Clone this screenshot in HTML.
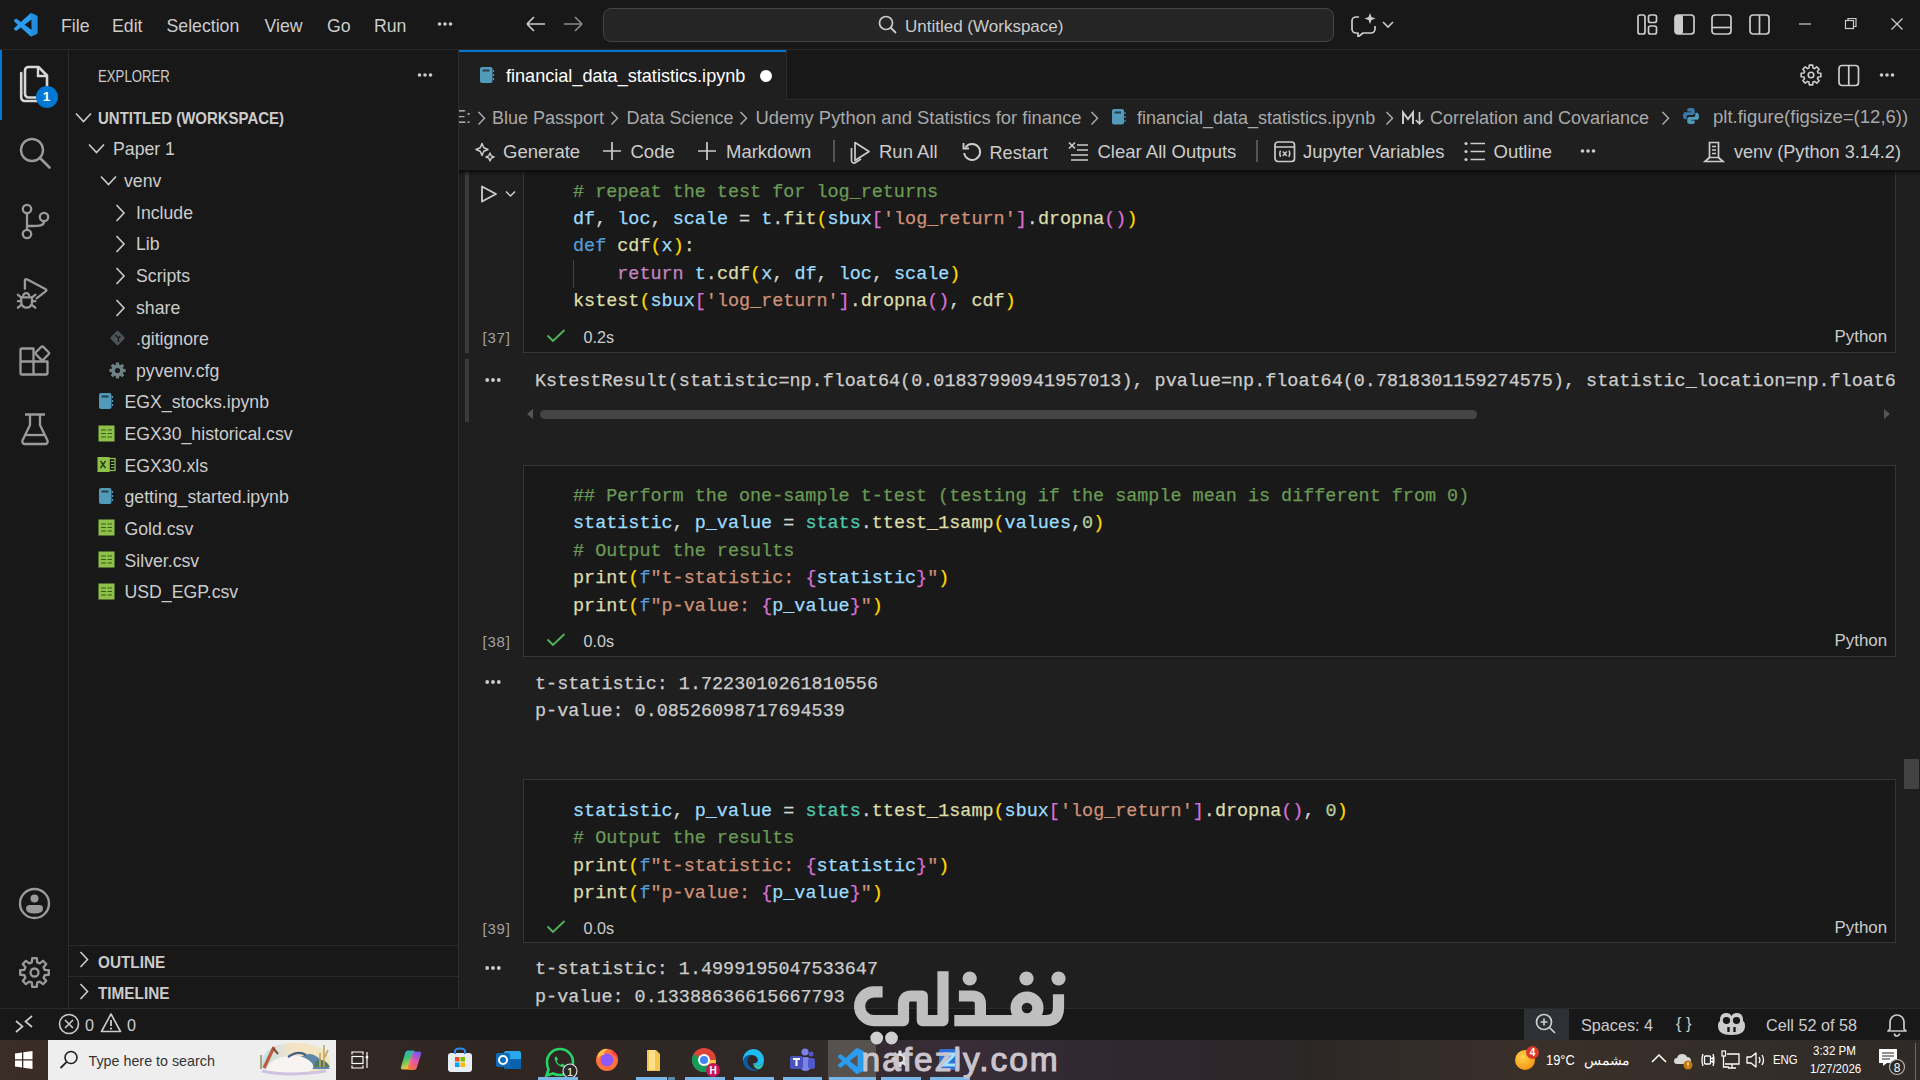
<!DOCTYPE html>
<html><head><meta charset="utf-8"><style>
html,body{margin:0;padding:0;width:1920px;height:1080px;overflow:hidden;background:#181818}
body>div,body>svg{position:absolute;box-sizing:border-box}
.s{font-family:"Liberation Sans",sans-serif;white-space:pre}
.m{font-family:"Liberation Mono",monospace;white-space:pre;-webkit-text-stroke:0.25px currentColor}
</style></head><body>
<div style="left:0px;top:0px;width:1920px;height:49px;background:#181818;"></div>
<div style="left:0px;top:49px;width:1920px;height:1px;background:#2b2b2b;"></div>
<div style="left:0px;top:50px;width:68px;height:959px;background:#181818;"></div>
<div style="left:68px;top:50px;width:1px;height:959px;background:#2b2b2b;"></div>
<div style="left:69px;top:50px;width:390px;height:959px;background:#181818;"></div>
<div style="left:458px;top:50px;width:1px;height:959px;background:#2b2b2b;"></div>
<div style="left:459px;top:50px;width:1461px;height:959px;background:#1f1f1f;"></div>
<div style="left:0px;top:1008px;width:1920px;height:32px;background:#181818;"></div>
<div style="left:0px;top:1008px;width:1920px;height:1px;background:#2b2b2b;"></div>
<svg style="left:13.5px;top:13px;" width="25" height="25" viewBox="0 0 25 25"><g transform="scale(0.235)"><path fill="#2a9cf0" d="M96.46 10.8L75.86.87a6.23 6.23 0 0 0-7.1 1.21L29.35 38.04 12.19 25.01a4.16 4.16 0 0 0-5.32.24L1.36 30.26a4.17 4.17 0 0 0 0 6.16L16.25 50 1.37 63.58a4.17 4.17 0 0 0 0 6.16l5.51 5.01a4.16 4.16 0 0 0 5.32.24l17.16-13.03 39.41 35.96a6.22 6.22 0 0 0 7.1 1.21l20.6-9.92A6.25 6.25 0 0 0 100 83.58V16.42a6.25 6.25 0 0 0-3.54-5.62zM75.01 72.7L45.1 50l29.91-22.7v45.4z"/><path fill="#1a7ccc" d="M96.46 10.8L75.86.87a6.23 6.23 0 0 0-7.1 1.21L68.76 2.08 75 27.3V72.7L68.76 97.92a6.22 6.22 0 0 0 7.1 1.21l20.6-9.92A6.25 6.25 0 0 0 100 83.58V16.42a6.25 6.25 0 0 0-3.54-5.62z" opacity=".5"/></g></svg>
<div class="s" style="left:61.00px;top:17.96px;font-size:17.7px;line-height:17.7px;color:#cccccc;">File</div>
<div class="s" style="left:112.00px;top:17.96px;font-size:17.7px;line-height:17.7px;color:#cccccc;">Edit</div>
<div class="s" style="left:166.50px;top:17.96px;font-size:17.7px;line-height:17.7px;color:#cccccc;">Selection</div>
<div class="s" style="left:264.50px;top:17.96px;font-size:17.7px;line-height:17.7px;color:#cccccc;">View</div>
<div class="s" style="left:327.00px;top:17.96px;font-size:17.7px;line-height:17.7px;color:#cccccc;">Go</div>
<div class="s" style="left:374.00px;top:17.96px;font-size:17.7px;line-height:17.7px;color:#cccccc;">Run</div>
<svg style="left:430px;top:14px;" width="30" height="20" viewBox="0 0 30 20"><circle cx="9.5" cy="10" r="1.8" fill="#cccccc"/><circle cx="15.0" cy="10" r="1.8" fill="#cccccc"/><circle cx="20.5" cy="10" r="1.8" fill="#cccccc"/></svg>
<svg style="left:524px;top:14px;" width="24" height="20" viewBox="0 0 24 20"><path d="M3 10H21M3 10L10 3M3 10L10 17" stroke="#cccccc" stroke-width="1.7" fill="none"/></svg>
<svg style="left:561px;top:14px;" width="24" height="20" viewBox="0 0 24 20"><path d="M3 10H21M21 10L14 3M21 10L14 17" stroke="#8a8a8a" stroke-width="1.7" fill="none"/></svg>
<div style="left:603px;top:8px;width:731px;height:34px;background:#252525;border:1px solid #444444;border-radius:8px"></div>
<svg style="left:876px;top:14px;" width="22" height="22" viewBox="0 0 22 22"><circle cx="10" cy="9" r="6.5" stroke="#cccccc" stroke-width="1.7" fill="none"/><path d="M14.5 13.5L20 19" stroke="#cccccc" stroke-width="1.8"/></svg>
<div class="s" style="left:905.00px;top:17.80px;font-size:17px;line-height:17px;color:#cccccc;">Untitled (Workspace)</div>
<svg style="left:1350px;top:11px;" width="48" height="26" viewBox="0 0 48 26"><path d="M9 6H6a4 4 0 0 0-4 4v8a4 4 0 0 0 4 4h2v4l5-4h8a4 4 0 0 0 4-4v-3" stroke="#cccccc" stroke-width="1.7" fill="none" stroke-linejoin="round"/><path d="M20 2l1.5 4 4 1.5-4 1.5-1.5 4-1.5-4-4-1.5 4-1.5z" fill="#cccccc"/><path d="M33 11l5 5 5-5" stroke="#cccccc" stroke-width="1.6" fill="none"/></svg>
<svg style="left:1636px;top:13px;" width="24" height="24" viewBox="0 0 24 24"><rect x="2" y="2" width="7" height="19" rx="2" stroke="#cccccc" stroke-width="1.7" fill="none"/><rect x="12.5" y="2" width="8" height="7.5" rx="2" stroke="#cccccc" stroke-width="1.7" fill="none"/><rect x="12.5" y="13" width="8" height="8" rx="2" stroke="#cccccc" stroke-width="1.7" fill="none"/></svg>
<svg style="left:1673px;top:13px;" width="24" height="24" viewBox="0 0 24 24"><rect x="2" y="2" width="19" height="19" rx="3" stroke="#cccccc" stroke-width="1.7" fill="none"/><rect x="2" y="2" width="8" height="19" rx="2" fill="#cccccc"/></svg>
<svg style="left:1710px;top:13px;" width="24" height="24" viewBox="0 0 24 24"><rect x="2" y="2" width="19" height="19" rx="3" stroke="#cccccc" stroke-width="1.7" fill="none"/><path d="M2 14.5H21" stroke="#cccccc" stroke-width="1.7"/></svg>
<svg style="left:1748px;top:13px;" width="24" height="24" viewBox="0 0 24 24"><rect x="2" y="2" width="19" height="19" rx="3" stroke="#cccccc" stroke-width="1.7" fill="none"/><path d="M11.5 2V21" stroke="#cccccc" stroke-width="1.7"/></svg>
<svg style="left:1798px;top:18px;" width="16" height="12" viewBox="0 0 16 12"><path d="M1 6H13" stroke="#cccccc" stroke-width="1.2"/></svg>
<svg style="left:1843px;top:16px;" width="16" height="16" viewBox="0 0 16 16"><rect x="2.5" y="4.5" width="8" height="8" stroke="#cccccc" stroke-width="1.2" fill="none"/><path d="M5 4.5V2.5H13V10.5H11" stroke="#cccccc" stroke-width="1.2" fill="none"/></svg>
<svg style="left:1889px;top:16px;" width="16" height="16" viewBox="0 0 16 16"><path d="M2.5 2.5L13.5 13.5M13.5 2.5L2.5 13.5" stroke="#cccccc" stroke-width="1.3"/></svg>
<div style="left:0px;top:50px;width:2px;height:70px;background:#0078d4;"></div>
<svg style="left:0px;top:50px;" width="68" height="70" viewBox="0 0 68 70"><path d="M21 74" /><path d="M21.2 23V47.5A3.5 3.5 0 0 0 24.7 51H41" stroke="#d7d7d7" stroke-width="2.6" fill="none" stroke-linecap="round"/><path d="M25 20.5A3.5 3.5 0 0 1 28.5 17H38.5L47 25.5V44A3.5 3.5 0 0 1 43.5 47.5H28.5A3.5 3.5 0 0 1 25 44Z" stroke="#d7d7d7" stroke-width="2.6" fill="none" stroke-linejoin="round"/><path d="M38 17.5V26H46.5" stroke="#d7d7d7" stroke-width="2.4" fill="none"/></svg>
<div style="left:35.5px;top:85.5px;width:22px;height:22px;border-radius:50%;background:#0078d4"></div>
<div class="s" style="left:35.5px;top:88px;width:22px;text-align:center;font-size:13.5px;line-height:17px;color:#fff;font-weight:700">1</div>
<svg style="left:17px;top:135px;" width="36" height="36" viewBox="0 0 36 36"><circle cx="15" cy="15" r="11" stroke="#9a9a9a" stroke-width="2.4" fill="none"/><path d="M23 23L32.5 32.5" stroke="#9a9a9a" stroke-width="2.6" stroke-linecap="round"/></svg>
<svg style="left:18px;top:202px;" width="34" height="40" viewBox="0 0 34 40"><circle cx="9" cy="7" r="4.2" stroke="#9a9a9a" stroke-width="2.3" fill="none"/><circle cx="9" cy="32" r="4.2" stroke="#9a9a9a" stroke-width="2.3" fill="none"/><circle cx="26" cy="15" r="4.2" stroke="#9a9a9a" stroke-width="2.3" fill="none"/><path d="M9 11.2V27.8M26 19.2C26 24 21 24 14 24H9" stroke="#9a9a9a" stroke-width="2.3" fill="none"/></svg>
<svg style="left:0px;top:270px;" width="68" height="50" viewBox="0 0 68 50"><g stroke="#9a9a9a" stroke-width="2.3" fill="none" stroke-linejoin="round" stroke-linecap="round"><path d="M24.9 18.7V11Q24.9 8.2 27.4 9.5L45.3 19Q47.6 20.3 45.3 21.6L36.6 28.3"/><path d="M23.1 26.2A3.1 3.1 0 0 1 29.3 26.2"/><path d="M21.2 27.4H32V32.3A5.4 5.4 0 0 1 21.2 32.3Z"/><path d="M17.9 24.8L21.2 27.4M17.9 31.2H21.2M17.9 37.7L21.4 34.9M35.3 24.8L32 27.4M35.3 31.2H32M35.3 37.7L31.8 34.9"/></g></svg>
<svg style="left:17px;top:343px;" width="36" height="36" viewBox="0 0 36 36"><path d="M5 5.5H16.5V31.5H5A1.5 1.5 0 0 1 3.5 30V7A1.5 1.5 0 0 1 5 5.5Z M3.5 18.5H30.5V30A1.5 1.5 0 0 1 29 31.5H16.5" stroke="#9a9a9a" stroke-width="2.3" fill="none" stroke-linejoin="round"/><rect x="20" y="5" width="10.5" height="10.5" rx="1.5" transform="rotate(45 25.25 10.25)" stroke="#9a9a9a" stroke-width="2.3" fill="none"/></svg>
<svg style="left:18px;top:411px;" width="34" height="36" viewBox="0 0 34 36"><path d="M7 3.5H27M12 3.5V14L4.5 29.5A2.5 2.5 0 0 0 7 33H27a2.5 2.5 0 0 0 2.5-3.5L22 14V3.5" stroke="#9a9a9a" stroke-width="2.3" fill="none" stroke-linejoin="round"/><path d="M8 24H26" stroke="#9a9a9a" stroke-width="2.3"/></svg>
<svg style="left:17px;top:886px;" width="36" height="36" viewBox="0 0 36 36"><circle cx="17.5" cy="17.5" r="14.5" stroke="#9a9a9a" stroke-width="2.4" fill="none"/><circle cx="17.5" cy="12.5" r="4" fill="#9a9a9a"/><path d="M9 22.5Q9 19 12.5 19H22.5Q26 19 26 22.5Q26 27.5 17.5 27.5Q9 27.5 9 22.5Z" fill="#9a9a9a"/></svg>
<svg style="left:17px;top:955px;" width="36" height="36" viewBox="0 0 36 36"><path d="M27.65 14.80 L31.82 15.25 L31.82 19.75 L27.65 20.20 L26.58 22.77 L29.22 26.04 L26.04 29.22 L22.77 26.58 L20.20 27.65 L19.75 31.82 L15.25 31.82 L14.80 27.65 L12.23 26.58 L8.96 29.22 L5.78 26.04 L8.42 22.77 L7.35 20.20 L3.18 19.75 L3.18 15.25 L7.35 14.80 L8.42 12.23 L5.78 8.96 L8.96 5.78 L12.23 8.42 L14.80 7.35 L15.25 3.18 L19.75 3.18 L20.20 7.35 L22.77 8.42 L26.04 5.78 L29.22 8.96 L26.58 12.23Z" stroke="#9a9a9a" stroke-width="2.3" fill="none" stroke-linejoin="round"/><circle cx="17.5" cy="17.5" r="4" stroke="#9a9a9a" stroke-width="2.3" fill="none"/></svg>
<div class="s" style="left:98.00px;top:68.54px;font-size:15.6px;line-height:15.6px;color:#cccccc;transform:scaleX(0.846);transform-origin:0 0;">EXPLORER</div>
<svg style="left:410px;top:65px;" width="30" height="20" viewBox="0 0 30 20"><circle cx="9.5" cy="10" r="1.8" fill="#cccccc"/><circle cx="15.0" cy="10" r="1.8" fill="#cccccc"/><circle cx="20.5" cy="10" r="1.8" fill="#cccccc"/></svg>
<svg style="left:74px;top:110.5px;" width="19" height="13" viewBox="0 0 19 13"><path d="M2 2.5 L9.5 10.5 L17 2.5" stroke="#cccccc" stroke-width="1.6" fill="none"/></svg>
<div class="s" style="left:98.00px;top:109.73px;font-size:16.2px;line-height:16.2px;color:#cccccc;font-weight:700;transform:scaleX(0.925);transform-origin:0 0;">UNTITLED (WORKSPACE)</div>
<svg style="left:87px;top:142.0px;" width="19" height="13" viewBox="0 0 19 13"><path d="M2 2.5 L9.5 10.5 L17 2.5" stroke="#cccccc" stroke-width="1.6" fill="none"/></svg>
<div class="s" style="left:113.00px;top:141.46px;font-size:17.7px;line-height:17.7px;color:#cccccc;">Paper 1</div>
<svg style="left:98.5px;top:173.62px;" width="19" height="13" viewBox="0 0 19 13"><path d="M2 2.5 L9.5 10.5 L17 2.5" stroke="#cccccc" stroke-width="1.6" fill="none"/></svg>
<div class="s" style="left:124.00px;top:173.08px;font-size:17.7px;line-height:17.7px;color:#cccccc;">venv</div>
<svg style="left:113.5px;top:202.74px;" width="12.5" height="20" viewBox="0 0 12.5 20"><path d="M2.5 2 L10.0 10.0 L2.5 18" stroke="#cccccc" stroke-width="1.6" fill="none"/></svg>
<div class="s" style="left:136.00px;top:204.70px;font-size:17.7px;line-height:17.7px;color:#cccccc;">Include</div>
<svg style="left:113.5px;top:234.36px;" width="12.5" height="20" viewBox="0 0 12.5 20"><path d="M2.5 2 L10.0 10.0 L2.5 18" stroke="#cccccc" stroke-width="1.6" fill="none"/></svg>
<div class="s" style="left:136.00px;top:236.32px;font-size:17.7px;line-height:17.7px;color:#cccccc;">Lib</div>
<svg style="left:113.5px;top:265.98px;" width="12.5" height="20" viewBox="0 0 12.5 20"><path d="M2.5 2 L10.0 10.0 L2.5 18" stroke="#cccccc" stroke-width="1.6" fill="none"/></svg>
<div class="s" style="left:136.00px;top:267.94px;font-size:17.7px;line-height:17.7px;color:#cccccc;">Scripts</div>
<svg style="left:113.5px;top:297.6px;" width="12.5" height="20" viewBox="0 0 12.5 20"><path d="M2.5 2 L10.0 10.0 L2.5 18" stroke="#cccccc" stroke-width="1.6" fill="none"/></svg>
<div class="s" style="left:136.00px;top:299.56px;font-size:17.7px;line-height:17.7px;color:#cccccc;">share</div>
<svg style="left:108px;top:327.72px;" width="19" height="19" viewBox="0 0 19 19"><rect x="4" y="4.5" width="11" height="11" rx="1.5" transform="rotate(45 9.5 10)" fill="#4b5357"/><path d="M7.5 7L10.5 10V14M10.5 10L12.5 8" stroke="#181818" stroke-width="1.3" fill="none"/></svg>
<div class="s" style="left:136.00px;top:331.18px;font-size:17.7px;line-height:17.7px;color:#cccccc;">.gitignore</div>
<svg style="left:108px;top:360.84000000000003px;" width="19" height="19" viewBox="0 0 19 19"><path d="M15.23 7.73 L17.57 8.03 L17.57 10.97 L15.23 11.27 L14.81 12.30 L16.24 14.17 L14.17 16.24 L12.30 14.81 L11.27 15.23 L10.97 17.57 L8.03 17.57 L7.73 15.23 L6.70 14.81 L4.83 16.24 L2.76 14.17 L4.19 12.30 L3.77 11.27 L1.43 10.97 L1.43 8.03 L3.77 7.73 L4.19 6.70 L2.76 4.83 L4.83 2.76 L6.70 4.19 L7.73 3.77 L8.03 1.43 L10.97 1.43 L11.27 3.77 L12.30 4.19 L14.17 2.76 L16.24 4.83 L14.81 6.70Z" fill="#6d8086"/><circle cx="9.5" cy="9.5" r="2.6" fill="#181818"/></svg>
<div class="s" style="left:136.00px;top:362.80px;font-size:17.7px;line-height:17.7px;color:#cccccc;">pyvenv.cfg</div>
<svg style="left:98px;top:392.46000000000004px;" width="16" height="18" viewBox="0 0 16 18"><rect x="1" y="1" width="12.5" height="16" rx="2" fill="#519aba"/><rect x="3.5" y="3.5" width="7" height="2" fill="#1a1a1a" opacity=".7"/><path d="M14.5 4V6M14.5 8V10M14.5 12V14" stroke="#519aba" stroke-width="1.2"/></svg>
<div class="s" style="left:124.50px;top:394.42px;font-size:17.7px;line-height:17.7px;color:#cccccc;">EGX_stocks.ipynb</div>
<svg style="left:97.5px;top:424.58px;" width="17" height="17" viewBox="0 0 17 17"><rect x="0.5" y="0.5" width="16" height="16" fill="#8dc149"/><path d="M3 5H8M9.5 5H14M3 8.5H8M9.5 8.5H14M3 12H8M9.5 12H14" stroke="#3b5a1c" stroke-width="1.2"/></svg>
<div class="s" style="left:124.50px;top:426.03px;font-size:17.7px;line-height:17.7px;color:#cccccc;">EGX30_historical.csv</div>
<svg style="left:96.5px;top:456.2px;" width="19" height="17" viewBox="0 0 19 17"><rect x="0.5" y="1" width="12" height="15" fill="#8dc149"/><rect x="12" y="2.5" width="6" height="12" fill="none" stroke="#8dc149" stroke-width="1.3"/><path d="M3.5 5L8.5 12M8.5 5L3.5 12" stroke="#2a3d14" stroke-width="1.4"/><path d="M14 5.5H17M14 8.5H17M14 11.5H17" stroke="#8dc149" stroke-width="1"/></svg>
<div class="s" style="left:124.50px;top:457.65px;font-size:17.7px;line-height:17.7px;color:#cccccc;">EGX30.xls</div>
<svg style="left:98px;top:487.32px;" width="16" height="18" viewBox="0 0 16 18"><rect x="1" y="1" width="12.5" height="16" rx="2" fill="#519aba"/><rect x="3.5" y="3.5" width="7" height="2" fill="#1a1a1a" opacity=".7"/><path d="M14.5 4V6M14.5 8V10M14.5 12V14" stroke="#519aba" stroke-width="1.2"/></svg>
<div class="s" style="left:124.50px;top:489.27px;font-size:17.7px;line-height:17.7px;color:#cccccc;">getting_started.ipynb</div>
<svg style="left:97.5px;top:519.44px;" width="17" height="17" viewBox="0 0 17 17"><rect x="0.5" y="0.5" width="16" height="16" fill="#8dc149"/><path d="M3 5H8M9.5 5H14M3 8.5H8M9.5 8.5H14M3 12H8M9.5 12H14" stroke="#3b5a1c" stroke-width="1.2"/></svg>
<div class="s" style="left:124.50px;top:520.90px;font-size:17.7px;line-height:17.7px;color:#cccccc;">Gold.csv</div>
<svg style="left:97.5px;top:551.06px;" width="17" height="17" viewBox="0 0 17 17"><rect x="0.5" y="0.5" width="16" height="16" fill="#8dc149"/><path d="M3 5H8M9.5 5H14M3 8.5H8M9.5 8.5H14M3 12H8M9.5 12H14" stroke="#3b5a1c" stroke-width="1.2"/></svg>
<div class="s" style="left:124.50px;top:552.51px;font-size:17.7px;line-height:17.7px;color:#cccccc;">Silver.csv</div>
<svg style="left:97.5px;top:582.6800000000001px;" width="17" height="17" viewBox="0 0 17 17"><rect x="0.5" y="0.5" width="16" height="16" fill="#8dc149"/><path d="M3 5H8M9.5 5H14M3 8.5H8M9.5 8.5H14M3 12H8M9.5 12H14" stroke="#3b5a1c" stroke-width="1.2"/></svg>
<div class="s" style="left:124.50px;top:584.14px;font-size:17.7px;line-height:17.7px;color:#cccccc;">USD_EGP.csv</div>
<div style="left:69px;top:945px;width:389px;height:1px;background:#2b2b2b;"></div>
<div style="left:69px;top:976px;width:389px;height:1px;background:#2b2b2b;"></div>
<svg style="left:78px;top:950px;" width="12" height="19" viewBox="0 0 12 19"><path d="M2.5 2 L9.5 9.5 L2.5 17" stroke="#cccccc" stroke-width="1.6" fill="none"/></svg>
<div class="s" style="left:98.00px;top:953.73px;font-size:16.2px;line-height:16.2px;color:#cccccc;font-weight:700;transform:scaleX(0.945);transform-origin:0 0;">OUTLINE</div>
<svg style="left:78px;top:981.5px;" width="12" height="19" viewBox="0 0 12 19"><path d="M2.5 2 L9.5 9.5 L2.5 17" stroke="#cccccc" stroke-width="1.6" fill="none"/></svg>
<div class="s" style="left:98.00px;top:985.23px;font-size:16.2px;line-height:16.2px;color:#cccccc;font-weight:700;transform:scaleX(0.945);transform-origin:0 0;">TIMELINE</div>
<div style="left:459px;top:50px;width:1461px;height:49px;background:#181818;"></div>
<div style="left:459px;top:99px;width:1461px;height:1px;background:#2b2b2b;"></div>
<div style="left:459px;top:50px;width:327px;height:50px;background:#1f1f1f;"></div>
<div style="left:459px;top:50px;width:327px;height:2px;background:#0078d4;"></div>
<div style="left:786px;top:50px;width:1px;height:49px;background:#2b2b2b;"></div>
<svg style="left:479px;top:66px;" width="16" height="18" viewBox="0 0 16 18"><rect x="1" y="1" width="12.5" height="16" rx="2" fill="#519aba"/><rect x="3.5" y="3.5" width="7" height="2" fill="#1a1a1a" opacity=".7"/><path d="M14.5 4V6M14.5 8V10M14.5 12V14" stroke="#519aba" stroke-width="1.2"/></svg>
<div class="s" style="left:506.00px;top:66.86px;font-size:18.1px;line-height:18.1px;color:#ffffff;">financial_data_statistics.ipynb</div>
<div style="left:760px;top:69.5px;width:12px;height:12px;border-radius:50%;background:#ffffff"></div>
<svg style="left:1799px;top:63px;" width="26" height="26" viewBox="0 0 26 26"><path d="M19.02 9.98 L21.86 10.33 L21.86 13.67 L19.02 14.02 L18.39 15.53 L20.15 17.79 L17.79 20.15 L15.53 18.39 L14.02 19.02 L13.67 21.86 L10.33 21.86 L9.98 19.02 L8.47 18.39 L6.21 20.15 L3.85 17.79 L5.61 15.53 L4.98 14.02 L2.14 13.67 L2.14 10.33 L4.98 9.98 L5.61 8.47 L3.85 6.21 L6.21 3.85 L8.47 5.61 L9.98 4.98 L10.33 2.14 L13.67 2.14 L14.02 4.98 L15.53 5.61 L17.79 3.85 L20.15 6.21 L18.39 8.47Z" stroke="#cccccc" stroke-width="1.6" fill="none" stroke-linejoin="round"/><circle cx="12" cy="12" r="2.8" stroke="#cccccc" stroke-width="1.6" fill="none"/></svg>
<svg style="left:1836px;top:63px;" width="26" height="26" viewBox="0 0 26 26"><rect x="3" y="2.5" width="19.5" height="20" rx="3" stroke="#cccccc" stroke-width="1.7" fill="none"/><path d="M12.75 2.5V22.5" stroke="#cccccc" stroke-width="1.7"/></svg>
<svg style="left:1872px;top:65px;" width="30" height="20" viewBox="0 0 30 20"><circle cx="9.5" cy="10" r="1.8" fill="#cccccc"/><circle cx="15.0" cy="10" r="1.8" fill="#cccccc"/><circle cx="20.5" cy="10" r="1.8" fill="#cccccc"/></svg>
<div style="left:459px;top:104px;width:14px;height:26px;overflow:hidden"><div class="s" style="position:absolute;left:-5px;top:4.4px;font-size:18px;line-height:18px;color:#a9a9a9">E:</div></div>
<svg style="left:475.5px;top:109.5px;" width="11" height="16.5" viewBox="0 0 11 16.5"><path d="M2.5 2 L8.5 8.25 L2.5 14.5" stroke="#a9a9a9" stroke-width="1.5" fill="none"/></svg>
<div class="s" style="left:492.00px;top:109.40px;font-size:18px;line-height:18px;color:#a9a9a9;">Blue Passport</div>
<svg style="left:608.5px;top:109.5px;" width="11" height="16.5" viewBox="0 0 11 16.5"><path d="M2.5 2 L8.5 8.25 L2.5 14.5" stroke="#a9a9a9" stroke-width="1.5" fill="none"/></svg>
<div class="s" style="left:626.50px;top:109.40px;font-size:18px;line-height:18px;color:#a9a9a9;">Data Science</div>
<svg style="left:738.0px;top:109.5px;" width="11" height="16.5" viewBox="0 0 11 16.5"><path d="M2.5 2 L8.5 8.25 L2.5 14.5" stroke="#a9a9a9" stroke-width="1.5" fill="none"/></svg>
<div class="s" style="left:755.50px;top:109.06px;font-size:18.4px;line-height:18.4px;color:#a9a9a9;">Udemy Python and Statistics for finance</div>
<svg style="left:1088.5px;top:109.5px;" width="11" height="16.5" viewBox="0 0 11 16.5"><path d="M2.5 2 L8.5 8.25 L2.5 14.5" stroke="#a9a9a9" stroke-width="1.5" fill="none"/></svg>
<svg style="left:1111px;top:108px;" width="16" height="18" viewBox="0 0 16 18"><rect x="1" y="1" width="12" height="15.5" rx="2" fill="#519aba"/><rect x="3.5" y="3.5" width="6.5" height="2" fill="#1a1a1a" opacity=".7"/><path d="M14 4V6M14 8V10M14 12V14" stroke="#519aba" stroke-width="1.1"/></svg>
<div class="s" style="left:1137.00px;top:109.40px;font-size:18px;line-height:18px;color:#a9a9a9;">financial_data_statistics.ipynb</div>
<svg style="left:1384.0px;top:109.5px;" width="11" height="16.5" viewBox="0 0 11 16.5"><path d="M2.5 2 L8.5 8.25 L2.5 14.5" stroke="#a9a9a9" stroke-width="1.5" fill="none"/></svg>
<svg style="left:1400px;top:108.5px;" width="26" height="18" viewBox="0 0 26 18"><path d="M3 15V3.5L8 10L13 3.5V15" stroke="#cccccc" stroke-width="2" fill="none" stroke-linejoin="miter"/><path d="M19.5 3V14.5M15.8 11L19.5 14.8L23.2 11" stroke="#cccccc" stroke-width="1.7" fill="none"/></svg>
<div class="s" style="left:1430.00px;top:109.40px;font-size:18px;line-height:18px;color:#a9a9a9;">Correlation and Covariance</div>
<svg style="left:1659.5px;top:109.5px;" width="11" height="16.5" viewBox="0 0 11 16.5"><path d="M2.5 2 L8.5 8.25 L2.5 14.5" stroke="#a9a9a9" stroke-width="1.5" fill="none"/></svg>
<svg style="left:1682px;top:107px;" width="18" height="18" viewBox="0 0 18 18"><path d="M8.5 1C5 1 5.3 2.5 5.3 2.5V4.5H8.7V5.2H3.5S1 4.9 1 8.6 3.2 12.2 3.2 12.2H4.6V10.3S4.5 8 6.8 8H10.6S12.7 8 12.7 6V2.8S13 1 8.5 1Z" fill="#3c78aa"/><path d="M9.5 17C13 17 12.7 15.5 12.7 15.5V13.5H9.3V12.8H14.5S17 13.1 17 9.4 14.8 5.8 14.8 5.8H13.4V7.7S13.5 10 11.2 10H7.4S5.3 10 5.3 12V15.2S5 17 9.5 17Z" fill="#519aba"/></svg>
<div class="s" style="left:1713.00px;top:108.23px;font-size:18.55px;line-height:18.55px;color:#a9a9a9;">plt.figure(figsize=(12,6))</div>
<svg style="left:475px;top:141px;" width="22" height="22" viewBox="0 0 22 22"><path d="M7 2.5L8.8 6.7 13 8.5 8.8 10.3 7 14.5 5.2 10.3 1 8.5 5.2 6.7Z" stroke="#cccccc" stroke-width="1.5" fill="none" stroke-linejoin="round"/><path d="M15 12L16.2 14.8 19 16 16.2 17.2 15 20 13.8 17.2 11 16 13.8 14.8Z" stroke="#cccccc" stroke-width="1.4" fill="none" stroke-linejoin="round"/></svg>
<div class="s" style="left:503.00px;top:143.28px;font-size:18.5px;line-height:18.5px;color:#cccccc;">Generate</div>
<svg style="left:601.5px;top:141px;" width="20" height="20" viewBox="0 0 20 20"><path d="M10 1V19M1 10H19" stroke="#cccccc" stroke-width="1.7"/></svg>
<div class="s" style="left:630.50px;top:143.28px;font-size:18.5px;line-height:18.5px;color:#cccccc;">Code</div>
<svg style="left:696.5px;top:141px;" width="20" height="20" viewBox="0 0 20 20"><path d="M10 1V19M1 10H19" stroke="#cccccc" stroke-width="1.7"/></svg>
<div class="s" style="left:726.00px;top:143.28px;font-size:18.5px;line-height:18.5px;color:#cccccc;">Markdown</div>
<div style="left:833px;top:140px;width:1.5px;height:22px;background:#555555;"></div>
<svg style="left:848px;top:139px;" width="24" height="26" viewBox="0 0 24 26"><path d="M7 3.5L21 12.5L7 21.5Z" stroke="#cccccc" stroke-width="1.7" fill="none" stroke-linejoin="round"/><path d="M3.5 9V21.5A2.5 2.5 0 0 0 7.5 23.5L13 20" stroke="#cccccc" stroke-width="1.7" fill="none"/></svg>
<div class="s" style="left:879.00px;top:143.28px;font-size:18.5px;line-height:18.5px;color:#cccccc;">Run All</div>
<svg style="left:960px;top:140px;" width="24" height="24" viewBox="0 0 24 24"><path d="M5.5 7.5A8 8 0 1 1 4.2 13" stroke="#cccccc" stroke-width="1.9" fill="none"/><path d="M3.5 3V8.5H9" stroke="#cccccc" stroke-width="1.9" fill="none"/></svg>
<div class="s" style="left:989.50px;top:143.62px;font-size:18.1px;line-height:18.1px;color:#cccccc;">Restart</div>
<svg style="left:1066px;top:140px;" width="26" height="24" viewBox="0 0 26 24"><path d="M3 2.5L9 8.5M9 2.5L3 8.5" stroke="#cccccc" stroke-width="1.6"/><path d="M11 5H22M11 10H22M5 15H22M5 20H22" stroke="#cccccc" stroke-width="1.7"/></svg>
<div class="s" style="left:1097.50px;top:143.28px;font-size:18.5px;line-height:18.5px;color:#cccccc;">Clear All Outputs</div>
<div style="left:1256px;top:140px;width:1.5px;height:22px;background:#555555;"></div>
<svg style="left:1273px;top:140px;" width="24" height="24" viewBox="0 0 24 24"><rect x="2" y="2" width="19.5" height="19.5" rx="3" stroke="#cccccc" stroke-width="1.7" fill="none"/><path d="M2 7H21.5" stroke="#cccccc" stroke-width="1.5"/><path d="M7.5 10.5Q6 13 7.5 17M16 10.5Q17.5 13 16 17M9.8 11.5L13.8 16M13.8 11.5L9.8 16" stroke="#cccccc" stroke-width="1.4" fill="none"/></svg>
<div class="s" style="left:1303.00px;top:143.28px;font-size:18.5px;line-height:18.5px;color:#cccccc;">Jupyter Variables</div>
<svg style="left:1463px;top:140px;" width="24" height="24" viewBox="0 0 24 24"><circle cx="3" cy="3.5" r="1.6" fill="#cccccc"/><circle cx="3" cy="11.5" r="1.6" fill="#cccccc"/><circle cx="3" cy="19.5" r="1.6" fill="#cccccc"/><path d="M7.5 3.5H22M7.5 11.5H22M7.5 19.5H22" stroke="#cccccc" stroke-width="1.7"/></svg>
<div class="s" style="left:1493.50px;top:143.28px;font-size:18.5px;line-height:18.5px;color:#cccccc;">Outline</div>
<svg style="left:1573px;top:141px;" width="30" height="20" viewBox="0 0 30 20"><circle cx="9.5" cy="10" r="1.8" fill="#cccccc"/><circle cx="15.0" cy="10" r="1.8" fill="#cccccc"/><circle cx="20.5" cy="10" r="1.8" fill="#cccccc"/></svg>
<svg style="left:1702px;top:140px;" width="24" height="24" viewBox="0 0 24 24"><path d="M7.5 2.5H16.5V17.5H7.5Z" stroke="#cccccc" stroke-width="1.7" fill="none"/><path d="M10 6.5H14M10 10H14M10 13.5H14" stroke="#cccccc" stroke-width="1.5"/><path d="M7.5 17.5L3 21.5H21L16.5 17.5" stroke="#cccccc" stroke-width="1.7" fill="none"/></svg>
<div class="s" style="left:1734.00px;top:143.12px;font-size:18.1px;line-height:18.1px;color:#cccccc;">venv (Python 3.14.2)</div>
<div style="left:523px;top:170px;width:1373px;height:183px;background:#191919;border:1px solid #353535;border-top:none"></div>
<div style="left:465px;top:170px;width:4px;height:183px;background:#3a3a3a;"></div>
<div style="left:465px;top:359px;width:4px;height:63px;background:#3a3a3a;"></div>
<svg style="left:478px;top:183px;" width="42" height="22" viewBox="0 0 42 22"><path d="M4 3.5L18 11L4 18.5Z" stroke="#cccccc" stroke-width="1.8" fill="none" stroke-linejoin="round"/><path d="M28 8.5L32.5 13L37 8.5" stroke="#cccccc" stroke-width="1.5" fill="none"/></svg>
<div class="m" style="left:573px;top:183.58px;font-size:18.45px;line-height:18.45px"><span style="color:#6a9955"># repeat the test for log_returns</span></div>
<div class="m" style="left:573px;top:211.03px;font-size:18.45px;line-height:18.45px"><span style="color:#9cdcfe">df</span><span style="color:#d4d4d4">, </span><span style="color:#9cdcfe">loc</span><span style="color:#d4d4d4">, </span><span style="color:#9cdcfe">scale</span><span style="color:#d4d4d4"> = </span><span style="color:#9cdcfe">t</span><span style="color:#d4d4d4">.</span><span style="color:#dcdcaa">fit</span><span style="color:#ffd700">(</span><span style="color:#9cdcfe">sbux</span><span style="color:#da70d6">[</span><span style="color:#ce9178">'log_return'</span><span style="color:#da70d6">]</span><span style="color:#d4d4d4">.</span><span style="color:#dcdcaa">dropna</span><span style="color:#da70d6">()</span><span style="color:#ffd700">)</span></div>
<div class="m" style="left:573px;top:238.48px;font-size:18.45px;line-height:18.45px"><span style="color:#569cd6">def</span><span style="color:#d4d4d4"> </span><span style="color:#dcdcaa">cdf</span><span style="color:#ffd700">(</span><span style="color:#9cdcfe">x</span><span style="color:#ffd700">)</span><span style="color:#d4d4d4">:</span></div>
<div class="m" style="left:573px;top:265.93px;font-size:18.45px;line-height:18.45px"><span style="color:#d4d4d4">    </span><span style="color:#c586c0">return</span><span style="color:#d4d4d4"> </span><span style="color:#9cdcfe">t</span><span style="color:#d4d4d4">.</span><span style="color:#dcdcaa">cdf</span><span style="color:#ffd700">(</span><span style="color:#9cdcfe">x</span><span style="color:#d4d4d4">, </span><span style="color:#9cdcfe">df</span><span style="color:#d4d4d4">, </span><span style="color:#9cdcfe">loc</span><span style="color:#d4d4d4">, </span><span style="color:#9cdcfe">scale</span><span style="color:#ffd700">)</span></div>
<div class="m" style="left:573px;top:293.38px;font-size:18.45px;line-height:18.45px"><span style="color:#dcdcaa">kstest</span><span style="color:#ffd700">(</span><span style="color:#9cdcfe">sbux</span><span style="color:#da70d6">[</span><span style="color:#ce9178">'log_return'</span><span style="color:#da70d6">]</span><span style="color:#d4d4d4">.</span><span style="color:#dcdcaa">dropna</span><span style="color:#da70d6">()</span><span style="color:#d4d4d4">, </span><span style="color:#dcdcaa">cdf</span><span style="color:#ffd700">)</span></div>
<div style="left:573px;top:260px;width:1.2px;height:28px;background:#404040;"></div>
<div class="s" style="left:482.50px;top:330.25px;font-size:15px;line-height:15px;color:#a0a0a0;letter-spacing:0.8px">[37]</div>
<svg style="left:545px;top:328px;" width="22" height="16" viewBox="0 0 22 16"><path d="M2.5 7.5L8 13L19.5 2" stroke="#4fb35a" stroke-width="1.9" fill="none"/></svg>
<div class="s" style="left:583.50px;top:329.23px;font-size:16.2px;line-height:16.2px;color:#cccccc;">0.2s</div>
<div class="s" style="left:1834.50px;top:329.13px;font-size:16.9px;line-height:16.9px;color:#cccccc;">Python</div>
<svg style="left:478px;top:370px;" width="30" height="20" viewBox="0 0 30 20"><circle cx="9.2" cy="10" r="1.9" fill="#cccccc"/><circle cx="15.0" cy="10" r="1.9" fill="#cccccc"/><circle cx="20.8" cy="10" r="1.9" fill="#cccccc"/></svg>
<div class="m" style="left:535px;top:372.68px;width:1360px;overflow:hidden;font-size:18.45px;line-height:18.45px;color:#cccccc">KstestResult(statistic=np.float64(0.01837990941957013), pvalue=np.float64(0.7818301159274575), statistic_location=np.float64(-0.0121), statistic_sign=np.int8(1))</div>
<svg style="left:524px;top:406px;" width="12" height="16" viewBox="0 0 12 16"><path d="M9 3L3 8L9 13Z" fill="#555555"/></svg>
<svg style="left:1881px;top:406px;" width="12" height="16" viewBox="0 0 12 16"><path d="M3 3L9 8L3 13Z" fill="#555555"/></svg>
<div style="left:540px;top:410px;width:937px;height:9px;border-radius:5px;background:#454545"></div>
<div style="left:523px;top:465px;width:1373px;height:192px;background:#191919;border:1px solid #353535"></div>
<div class="m" style="left:573px;top:487.88px;font-size:18.45px;line-height:18.45px"><span style="color:#6a9955">## Perform the one-sample t-test (testing if the sample mean is different from 0)</span></div>
<div class="m" style="left:573px;top:515.33px;font-size:18.45px;line-height:18.45px"><span style="color:#9cdcfe">statistic</span><span style="color:#d4d4d4">, </span><span style="color:#9cdcfe">p_value</span><span style="color:#d4d4d4"> = </span><span style="color:#4ec9b0">stats</span><span style="color:#d4d4d4">.</span><span style="color:#dcdcaa">ttest_1samp</span><span style="color:#ffd700">(</span><span style="color:#9cdcfe">values</span><span style="color:#d4d4d4">,</span><span style="color:#b5cea8">0</span><span style="color:#ffd700">)</span></div>
<div class="m" style="left:573px;top:542.78px;font-size:18.45px;line-height:18.45px"><span style="color:#6a9955"># Output the results</span></div>
<div class="m" style="left:573px;top:570.23px;font-size:18.45px;line-height:18.45px"><span style="color:#dcdcaa">print</span><span style="color:#ffd700">(</span><span style="color:#569cd6">f</span><span style="color:#ce9178">"t-statistic: </span><span style="color:#da70d6">{</span><span style="color:#9cdcfe">statistic</span><span style="color:#da70d6">}</span><span style="color:#ce9178">"</span><span style="color:#ffd700">)</span></div>
<div class="m" style="left:573px;top:597.68px;font-size:18.45px;line-height:18.45px"><span style="color:#dcdcaa">print</span><span style="color:#ffd700">(</span><span style="color:#569cd6">f</span><span style="color:#ce9178">"p-value: </span><span style="color:#da70d6">{</span><span style="color:#9cdcfe">p_value</span><span style="color:#da70d6">}</span><span style="color:#ce9178">"</span><span style="color:#ffd700">)</span></div>
<div class="s" style="left:482.50px;top:634.25px;font-size:15px;line-height:15px;color:#a0a0a0;letter-spacing:0.8px">[38]</div>
<svg style="left:545px;top:632px;" width="22" height="16" viewBox="0 0 22 16"><path d="M2.5 7.5L8 13L19.5 2" stroke="#4fb35a" stroke-width="1.9" fill="none"/></svg>
<div class="s" style="left:583.50px;top:633.23px;font-size:16.2px;line-height:16.2px;color:#cccccc;">0.0s</div>
<div class="s" style="left:1834.50px;top:633.13px;font-size:16.9px;line-height:16.9px;color:#cccccc;">Python</div>
<svg style="left:478px;top:672px;" width="30" height="20" viewBox="0 0 30 20"><circle cx="9.2" cy="10" r="1.9" fill="#cccccc"/><circle cx="15.0" cy="10" r="1.9" fill="#cccccc"/><circle cx="20.8" cy="10" r="1.9" fill="#cccccc"/></svg>
<div class="m" style="left:535px;top:675.58px;font-size:18.45px;line-height:18.45px"><span style="color:#cccccc">t-statistic: 1.7223010261810556</span></div>
<div class="m" style="left:535px;top:702.78px;font-size:18.45px;line-height:18.45px"><span style="color:#cccccc">p-value: 0.08526098717694539</span></div>
<div style="left:523px;top:779px;width:1373px;height:164px;background:#191919;border:1px solid #353535"></div>
<div class="m" style="left:573px;top:802.98px;font-size:18.45px;line-height:18.45px"><span style="color:#9cdcfe">statistic</span><span style="color:#d4d4d4">, </span><span style="color:#9cdcfe">p_value</span><span style="color:#d4d4d4"> = </span><span style="color:#4ec9b0">stats</span><span style="color:#d4d4d4">.</span><span style="color:#dcdcaa">ttest_1samp</span><span style="color:#ffd700">(</span><span style="color:#9cdcfe">sbux</span><span style="color:#da70d6">[</span><span style="color:#ce9178">'log_return'</span><span style="color:#da70d6">]</span><span style="color:#d4d4d4">.</span><span style="color:#dcdcaa">dropna</span><span style="color:#da70d6">()</span><span style="color:#d4d4d4">, </span><span style="color:#b5cea8">0</span><span style="color:#ffd700">)</span></div>
<div class="m" style="left:573px;top:830.43px;font-size:18.45px;line-height:18.45px"><span style="color:#6a9955"># Output the results</span></div>
<div class="m" style="left:573px;top:857.88px;font-size:18.45px;line-height:18.45px"><span style="color:#dcdcaa">print</span><span style="color:#ffd700">(</span><span style="color:#569cd6">f</span><span style="color:#ce9178">"t-statistic: </span><span style="color:#da70d6">{</span><span style="color:#9cdcfe">statistic</span><span style="color:#da70d6">}</span><span style="color:#ce9178">"</span><span style="color:#ffd700">)</span></div>
<div class="m" style="left:573px;top:885.33px;font-size:18.45px;line-height:18.45px"><span style="color:#dcdcaa">print</span><span style="color:#ffd700">(</span><span style="color:#569cd6">f</span><span style="color:#ce9178">"p-value: </span><span style="color:#da70d6">{</span><span style="color:#9cdcfe">p_value</span><span style="color:#da70d6">}</span><span style="color:#ce9178">"</span><span style="color:#ffd700">)</span></div>
<div class="s" style="left:482.50px;top:921.25px;font-size:15px;line-height:15px;color:#a0a0a0;letter-spacing:0.8px">[39]</div>
<svg style="left:545px;top:919px;" width="22" height="16" viewBox="0 0 22 16"><path d="M2.5 7.5L8 13L19.5 2" stroke="#4fb35a" stroke-width="1.9" fill="none"/></svg>
<div class="s" style="left:583.50px;top:920.23px;font-size:16.2px;line-height:16.2px;color:#cccccc;">0.0s</div>
<div class="s" style="left:1834.50px;top:920.13px;font-size:16.9px;line-height:16.9px;color:#cccccc;">Python</div>
<svg style="left:478px;top:958px;" width="30" height="20" viewBox="0 0 30 20"><circle cx="9.2" cy="10" r="1.9" fill="#cccccc"/><circle cx="15.0" cy="10" r="1.9" fill="#cccccc"/><circle cx="20.8" cy="10" r="1.9" fill="#cccccc"/></svg>
<div class="m" style="left:535px;top:961.48px;font-size:18.45px;line-height:18.45px"><span style="color:#cccccc">t-statistic: 1.4999195047533647</span></div>
<div class="m" style="left:535px;top:989.18px;font-size:18.45px;line-height:18.45px"><span style="color:#cccccc">p-value: 0.13388636615667793</span></div>
<div style="left:459px;top:170px;width:1461px;height:6px;background:linear-gradient(#0c0c0c,rgba(12,12,12,0))"></div>
<div style="left:1904px;top:759px;width:15px;height:30px;background:#434343;"></div>
<svg style="left:12px;top:1012px;" width="24" height="24" viewBox="0 0 24 24"><path d="M4 20L10.5 14.5L4 9M20 4L13.5 9.5L20 15" stroke="#cccccc" stroke-width="1.7" fill="none"/></svg>
<svg style="left:57px;top:1012px;" width="24" height="24" viewBox="0 0 24 24"><circle cx="12" cy="12" r="9.5" stroke="#cccccc" stroke-width="1.6" fill="none"/><path d="M8 8L16 16M16 8L8 16" stroke="#cccccc" stroke-width="1.6"/></svg>
<div class="s" style="left:85.00px;top:1017.23px;font-size:16.2px;line-height:16.2px;color:#cccccc;">0</div>
<svg style="left:99px;top:1011px;" width="24" height="24" viewBox="0 0 24 24"><path d="M12 3L2.5 20.5H21.5Z" stroke="#cccccc" stroke-width="1.6" fill="none" stroke-linejoin="round"/><path d="M12 9V15" stroke="#cccccc" stroke-width="1.8"/><circle cx="12" cy="17.6" r="1.1" fill="#cccccc"/></svg>
<div class="s" style="left:127.00px;top:1017.23px;font-size:16.2px;line-height:16.2px;color:#cccccc;">0</div>
<div style="left:1524px;top:1009px;width:45px;height:31px;background:#2d3136;"></div>
<svg style="left:1534px;top:1012px;" width="24" height="24" viewBox="0 0 24 24"><circle cx="10" cy="10" r="7.5" stroke="#cccccc" stroke-width="1.7" fill="none"/><path d="M15.5 15.5L21 21M10 6.5V13.5M6.5 10H13.5" stroke="#cccccc" stroke-width="1.7"/></svg>
<div class="s" style="left:1581.00px;top:1017.23px;font-size:16.2px;line-height:16.2px;color:#cccccc;">Spaces: 4</div>
<div class="s" style="left:1676.00px;top:1015.23px;font-size:16.2px;line-height:16.2px;color:#cccccc;">{ }</div>
<svg style="left:1717px;top:1010px;" width="30" height="28" viewBox="0 0 30 28"><path d="M3 10Q3 3 9.5 3Q13 3 14.5 6Q16 3 19.5 3Q26 3 26 10V11Q28 12 28 16Q28 25 14.5 25Q1 25 1 16Q1 12 3 11Z" fill="#cccccc"/><ellipse cx="9.5" cy="10.5" rx="3.6" ry="3.4" fill="#181818"/><ellipse cx="19.5" cy="10.5" rx="3.6" ry="3.4" fill="#181818"/><path d="M11.5 17V22M17.5 17V22" stroke="#181818" stroke-width="2.4"/></svg>
<div class="s" style="left:1766.00px;top:1017.23px;font-size:16.2px;line-height:16.2px;color:#cccccc;">Cell 52 of 58</div>
<svg style="left:1884px;top:1011px;" width="26" height="26" viewBox="0 0 26 26"><path d="M6 18V11A7 7 0 0 1 20 11V18L22 20H4Z" stroke="#cccccc" stroke-width="1.7" fill="none" stroke-linejoin="round"/><path d="M10.5 22.5A2.5 2.5 0 0 0 15.5 22.5" stroke="#cccccc" stroke-width="1.7" fill="none"/></svg>
<div style="left:0;top:1040px;width:1920px;height:40px;background:linear-gradient(90deg,#3a2c27 0%,#2f2622 25%,#2f2826 40%,#382d38 50%,#2f2830 58%,#2c2727 68%,#3a302a 80%,#2f2a27 100%)"></div>
<svg style="left:14px;top:1051px;" width="20" height="18" viewBox="0 0 20 18"><path d="M1 2.5L8 1.5V8.3H1ZM9.3 1.3L18.5 0V8.3H9.3ZM1 9.6H8V16.5L1 15.5ZM9.3 9.6H18.5V18L9.3 16.7Z" fill="#ffffff"/></svg>
<div style="left:48px;top:1040px;width:288px;height:40px;background:#eeeeee;"></div>
<svg style="left:58px;top:1049px;" width="22" height="22" viewBox="0 0 22 22"><circle cx="13" cy="8.5" r="6" stroke="#222" stroke-width="1.6" fill="none"/><path d="M8.7 12.8L2.5 19" stroke="#222" stroke-width="1.8"/></svg>
<div class="s" style="left:88.50px;top:1054.05px;font-size:14.3px;line-height:14.3px;color:#333333;">Type here to search</div>
<svg style="left:258px;top:1041px;" width="76" height="36" viewBox="0 0 76 36"><defs><linearGradient id="pg" x1="0" x2="1"><stop offset="0" stop-color="#bfe3ea"/><stop offset=".45" stop-color="#f6e2c6"/><stop offset="1" stop-color="#f2e7c0"/></linearGradient></defs><path d="M4 26Q2 10 20 4Q38 -1 58 5Q74 11 72 26Q60 33 38 33Q14 33 4 26Z" fill="url(#pg)"/><path d="M34 24Q46 10 56 14Q64 18 72 28H34Z" fill="#5d86a8"/><path d="M58 20Q66 16 72 26H56Z" fill="#4f7b5e"/><path d="M8 29Q12 17 30 15Q46 13 54 22Q58 28 50 31Q34 35 18 33Q9 32 8 29Z" fill="#f7f4f1"/><path d="M30 16Q40 9 48 14" stroke="#3f6188" stroke-width="2.2" fill="none"/><path d="M16 6L6 27" stroke="#c4583a" stroke-width="3.2"/><path d="M15 7L20 13" stroke="#7a4b3a" stroke-width="2"/><path d="M66 4V26M70 9L67 16M62 12V26" stroke="#c4a45f" stroke-width="1.6"/><path d="M4 30Q30 36 68 30" stroke="#cfc3e0" stroke-width="3" fill="none"/><path d="M3 14V28" stroke="#9a8a55" stroke-width="1.5"/></svg>
<svg style="left:349px;top:1049px;" width="24" height="22" viewBox="0 0 24 22"><path d="M3 5.5V3H14V5.5M3 16.5V19H14V16.5" stroke="#ffffff" stroke-width="1.2" fill="none"/><rect x="3" y="7.5" width="11" height="7" stroke="#ffffff" stroke-width="1.2" fill="none"/><path d="M18 3V19" stroke="#ffffff" stroke-width="1.2"/><rect x="16.8" y="7" width="2.4" height="2.4" fill="#ffffff"/></svg>
<svg style="left:399px;top:1049px;" width="24" height="22" viewBox="0 0 24 22"><defs><linearGradient id="cg1" x1="0" y1="0" x2="0.4" y2="1"><stop offset="0" stop-color="#27a5ff"/><stop offset=".5" stop-color="#3fc46a"/><stop offset="1" stop-color="#ffc83a"/></linearGradient><linearGradient id="cg2" x1="0.6" y1="0" x2="0.3" y2="1"><stop offset="0" stop-color="#7a5cff"/><stop offset=".55" stop-color="#ff5aa8"/><stop offset="1" stop-color="#ff7a3a"/></linearGradient></defs><path d="M9 1.5H14Q16.5 1.5 15.8 4L11.2 18.5Q10.6 20.5 8.5 20.5H4Q1.2 20.5 2 17.8L6.3 3.6Q6.9 1.5 9 1.5Z" fill="url(#cg1)"/><path d="M15.5 2.5H20Q22.8 2.5 22 5.2L17.7 19Q17.1 21 15 21H10.5Q8 21 8.7 18.6L13 4.4Q13.6 2.5 15.5 2.5Z" fill="url(#cg2)" opacity=".92"/></svg>
<svg style="left:446px;top:1047px;" width="28" height="26" viewBox="0 0 28 26"><rect x="2" y="6" width="24" height="19" rx="3" fill="#e8eef5"/><path d="M9 7V4Q9 1.5 14 1.5Q19 1.5 19 4V7" stroke="#2f8be6" stroke-width="2" fill="none"/><rect x="9" y="10" width="4.5" height="4.5" fill="#f25022"/><rect x="14.5" y="10" width="4.5" height="4.5" fill="#7fba00"/><rect x="9" y="15.5" width="4.5" height="4.5" fill="#00a4ef"/><rect x="14.5" y="15.5" width="4.5" height="4.5" fill="#ffb900"/></svg>
<svg style="left:495px;top:1047px;" width="28" height="26" viewBox="0 0 28 26"><rect x="9" y="4" width="17" height="18" rx="2" fill="#28a8ea"/><rect x="9" y="12" width="17" height="10" fill="#0a64ad"/><rect x="1" y="6" width="14" height="14" rx="2" fill="#0f6cbd"/><circle cx="8" cy="13" r="4" stroke="#fff" stroke-width="2" fill="none"/></svg>
<svg style="left:543px;top:1046px;" width="38" height="34" viewBox="0 0 38 34"><path d="M17 3A13 13 0 0 1 17 29Q13 29 10 27.5L3.5 29.5L5.5 23.5Q4 20.5 4 16A13 13 0 0 1 17 3Z" stroke="#25d366" stroke-width="2.6" fill="none"/><path d="M12 11Q11 14 14 18Q18 22 21 21L22 19L19 17.5L17.5 19Q15 18 13.5 15L15 13.5L13.5 10.5Z" fill="#25d366"/><circle cx="27" cy="25" r="7" fill="#2a2a2a" stroke="#dddddd" stroke-width="1.2"/><text x="27" y="29.5" text-anchor="middle" font-family="Liberation Sans" font-size="11" fill="#fff">1</text></svg>
<svg style="left:594px;top:1046px;" width="26" height="26" viewBox="0 0 26 26"><circle cx="13" cy="14" r="11" fill="#ff7139"/><circle cx="13" cy="14" r="6.5" fill="#9059ff"/><path d="M4 8Q8 2 14 3Q9 6 10 9Q5 9 4 14Z" fill="#ffbd4f"/><path d="M18 4Q24 8 24 14Q22 9 18 8Z" fill="#ff3750"/></svg>
<svg style="left:644px;top:1046px;" width="20" height="28" viewBox="0 0 20 28"><path d="M3 4H12L16 8V25H3Z" fill="#f5c64f"/><path d="M5 4H11V24H5Z" fill="#ffe08a"/></svg>
<svg style="left:690px;top:1045px;" width="32" height="32" viewBox="0 0 32 32"><circle cx="14" cy="15" r="12" fill="#db4437"/><path d="M14 15L26 15A12 12 0 0 1 8 25.4Z" fill="#0f9d58"/><path d="M14 15L8 25.4A12 12 0 0 1 3.6 9Z" fill="#0f9d58"/><path d="M14 15L26 15A12 12 0 0 1 20 25.4Z" fill="#ffcd40"/><circle cx="14" cy="15" r="5" fill="#4285f4" stroke="#fff" stroke-width="2"/><circle cx="23" cy="25" r="7" fill="#c2185b"/><text x="23" y="29" text-anchor="middle" font-family="Liberation Sans" font-weight="700" font-size="10" fill="#fff">H</text></svg>
<svg style="left:740px;top:1047px;" width="28" height="26" viewBox="0 0 28 26"><path d="M13 2A11 11 0 0 1 24 13Q24 17 20 18Q15 19 13 16Q17 17 18 13Q17 8 11 8Q4 8 3 15A11 11 0 0 1 13 2Z" fill="#1ebbee"/><path d="M3 15Q4 8 11 8Q5 12 9 19Q13 24 20 22A11 11 0 0 1 3 15Z" fill="#0c59a4"/><path d="M13 16Q15 19 20 18Q24 17 24 13A11 11 0 0 1 20 22Q14 23 13 16Z" fill="#35c1b0"/></svg>
<svg style="left:788px;top:1046px;" width="28" height="28" viewBox="0 0 28 28"><circle cx="17" cy="6" r="3.5" fill="#7b83eb"/><circle cx="23" cy="8" r="2.5" fill="#5059c9"/><rect x="12" y="11" width="11" height="14" rx="5" fill="#7b83eb"/><rect x="20" y="12" width="7" height="11" rx="3" fill="#5059c9"/><rect x="2" y="10" width="13" height="13" rx="2" fill="#4b53bc"/><path d="M5 13H12M8.5 13V20" stroke="#fff" stroke-width="2"/></svg>
<div style="left:828px;top:1040px;width:48px;height:40px;background:#57524e;"></div>
<svg style="left:838px;top:1048px;" width="26" height="26" viewBox="0 0 26 26"><g transform="scale(0.26)"><path fill="#2a9cf0" d="M96.46 10.8L75.86.87a6.23 6.23 0 0 0-7.1 1.21L29.35 38.04 12.19 25.01a4.16 4.16 0 0 0-5.32.24L1.36 30.26a4.17 4.17 0 0 0 0 6.16L16.25 50 1.37 63.58a4.17 4.17 0 0 0 0 6.16l5.51 5.01a4.16 4.16 0 0 0 5.32.24l17.16-13.03 39.41 35.96a6.22 6.22 0 0 0 7.1 1.21l20.6-9.92A6.25 6.25 0 0 0 100 83.58V16.42a6.25 6.25 0 0 0-3.54-5.62zM75.01 72.7L45.1 50l29.91-22.7v45.4z"/></g></svg>
<svg style="left:890px;top:1049px;" width="22" height="20" viewBox="0 0 22 20"><path d="M15.77 8.34 L18.38 8.58 L18.38 11.42 L15.77 11.66 L15.25 12.90 L16.93 14.92 L14.92 16.93 L12.90 15.25 L11.66 15.77 L11.42 18.38 L8.58 18.38 L8.34 15.77 L7.10 15.25 L5.08 16.93 L3.07 14.92 L4.75 12.90 L4.23 11.66 L1.62 11.42 L1.62 8.58 L4.23 8.34 L4.75 7.10 L3.07 5.08 L5.08 3.07 L7.10 4.75 L8.34 4.23 L8.58 1.62 L11.42 1.62 L11.66 4.23 L12.90 4.75 L14.92 3.07 L16.93 5.08 L15.25 7.10Z" fill="#e0e0e0"/><circle cx="10" cy="10" r="3" fill="#3a2f3a"/></svg>
<svg style="left:938px;top:1048px;" width="24" height="24" viewBox="0 0 24 24"><rect x="1" y="1" width="21" height="21" rx="2" fill="#2f6fd6"/><path d="M6 6H17L6 17H17" stroke="#9fe3ff" stroke-width="3" fill="none"/></svg>
<div style="left:538px;top:1077px;width:40px;height:3px;background:#7ab7e8;"></div>
<div style="left:636px;top:1077px;width:31px;height:3px;background:#7ab7e8;"></div>
<div style="left:685px;top:1077px;width:40px;height:3px;background:#7ab7e8;"></div>
<div style="left:734px;top:1077px;width:40px;height:3px;background:#7ab7e8;"></div>
<div style="left:783px;top:1077px;width:39px;height:3px;background:#7ab7e8;"></div>
<div style="left:829px;top:1077px;width:47px;height:3px;background:#7ab7e8;"></div>
<div style="left:881px;top:1077px;width:40px;height:3px;background:#7ab7e8;"></div>
<div style="left:930px;top:1077px;width:40px;height:3px;background:#7ab7e8;"></div>
<div style="left:668px;top:1077px;width:7px;height:3px;background:#5a86a8;"></div>
<div style="left:1515px;top:1050px;width:20px;height:20px;border-radius:50%;background:radial-gradient(circle at 40% 35%,#ffd24a,#f79a1a 70%)"></div>
<div style="left:1526px;top:1046px;width:13px;height:13px;border-radius:50%;background:#d93a2b"></div>
<div class="s" style="left:1526px;top:1047px;width:13px;text-align:center;font-size:10px;line-height:11px;color:#fff;font-weight:700">4</div>
<div class="s" style="left:1546.00px;top:1053.10px;font-size:14px;line-height:14px;color:#ffffff;transform:scaleX(0.92);transform-origin:0 0;">19°C</div>
<div class="s" style="left:1584.00px;top:1053.10px;font-size:14px;line-height:14px;color:#ffffff;">مشمس</div>
<svg style="left:1650px;top:1052px;" width="18" height="14" viewBox="0 0 18 14"><path d="M2 10L9 3L16 10" stroke="#fff" stroke-width="1.5" fill="none"/></svg>
<svg style="left:1673px;top:1049px;" width="22" height="22" viewBox="0 0 22 22"><path d="M4 15Q1 15 1 12Q1 9 4 9Q5 5 9 5Q13 5 14 8Q18 8 18 12Q18 15 15 15Z" fill="#d9d9d9"/><circle cx="15" cy="16" r="4.5" fill="#c47a0b"/><path d="M15 13.5V16.5M15 18V18.6" stroke="#fff" stroke-width="1.3"/></svg>
<svg style="left:1699px;top:1049px;" width="18" height="22" viewBox="0 0 18 22"><path d="M4 5Q2 11 4 17M14 5Q16 11 14 17" stroke="#fff" stroke-width="1.3" fill="none"/><rect x="5.5" y="7" width="6" height="8" rx="1" stroke="#fff" stroke-width="1.3" fill="none"/><path d="M11.5 10L14 8.5V13.5L11.5 12" stroke="#fff" stroke-width="1.2" fill="none"/></svg>
<svg style="left:1720px;top:1049px;" width="22" height="22" viewBox="0 0 22 22"><rect x="2" y="2" width="3.5" height="5" stroke="#fff" stroke-width="1.2" fill="none"/><path d="M3.5 7V18H9M7 5H19V15H5M12 15V19M8 19H16" stroke="#fff" stroke-width="1.3" fill="none"/></svg>
<svg style="left:1745px;top:1049px;" width="22" height="22" viewBox="0 0 22 22"><path d="M2 8H6L11 4V18L6 14H2Z" stroke="#fff" stroke-width="1.3" fill="none" stroke-linejoin="round"/><path d="M14 8Q16 11 14 14M17 6Q20 11 17 16" stroke="#fff" stroke-width="1.3" fill="none"/></svg>
<div class="s" style="left:1773.00px;top:1054.29px;font-size:12.6px;line-height:12.6px;color:#ffffff;transform:scaleX(0.9);transform-origin:0 0;">ENG</div>
<div class="s" style="left:1813.00px;top:1045.12px;font-size:12.8px;line-height:12.8px;color:#ffffff;transform:scaleX(0.9);transform-origin:0 0;">3:32 PM</div>
<div class="s" style="left:1810.00px;top:1062.62px;font-size:12.8px;line-height:12.8px;color:#ffffff;transform:scaleX(0.9);transform-origin:0 0;">1/27/2026</div>
<svg style="left:1876px;top:1046px;" width="32" height="32" viewBox="0 0 32 32"><path d="M3 3H21V17H11L7 20V17H3Z" fill="#ffffff"/><path d="M6 7H18M6 10H18M6 13H14" stroke="#2a2520" stroke-width="1.2"/><circle cx="21" cy="21" r="7.5" fill="#2e2825" stroke="#bbbbbb" stroke-width="1.1"/><text x="21" y="25.5" text-anchor="middle" font-family="Liberation Sans" font-size="12" fill="#fff">8</text></svg>
<div style="left:1915px;top:1043px;width:1px;height:37px;background:#6a6a6a;"></div>
<svg style="left:0px;top:0px;pointer-events:none" width="1920" height="1080" viewBox="0 0 1920 1080"><g fill="none" stroke="#bfbfbf" stroke-width="11.2" stroke-linejoin="round">
<path d="M882.6 991.8 H874 A14.4 14.4 0 0 0 874 1020.6 H903.5 V1004 Q903.5 996 911 996 H922.3 V1020.6 H943 V971.3"/>
<path d="M958.9 996 H972.4 Q980.4 996 980.4 1004 V1020.6"/>
<path d="M954.3 1020.6 H1046 Q1058.5 1020.6 1058.5 1008 V994.2"/>
<circle cx="1027" cy="1008" r="10.9"/>
</g>
<g fill="#bfbfbf"><circle cx="969.7" cy="978.5" r="7.1"/><circle cx="1026.5" cy="978.5" r="7.1"/><circle cx="1058.5" cy="978.5" r="7.1"/>
<circle cx="876.7" cy="1038" r="6.4" fill="#cfcfcf"/><circle cx="891.5" cy="1038" r="6.4" fill="#cfcfcf"/></g></svg>
<div class="s" style="left:861.50px;top:1042.53px;font-size:33.5px;line-height:33.5px;color:#cac4cc;letter-spacing:2px;-webkit-text-stroke:1.1px #cac4cc">nafezly.com</div>
</body></html>
